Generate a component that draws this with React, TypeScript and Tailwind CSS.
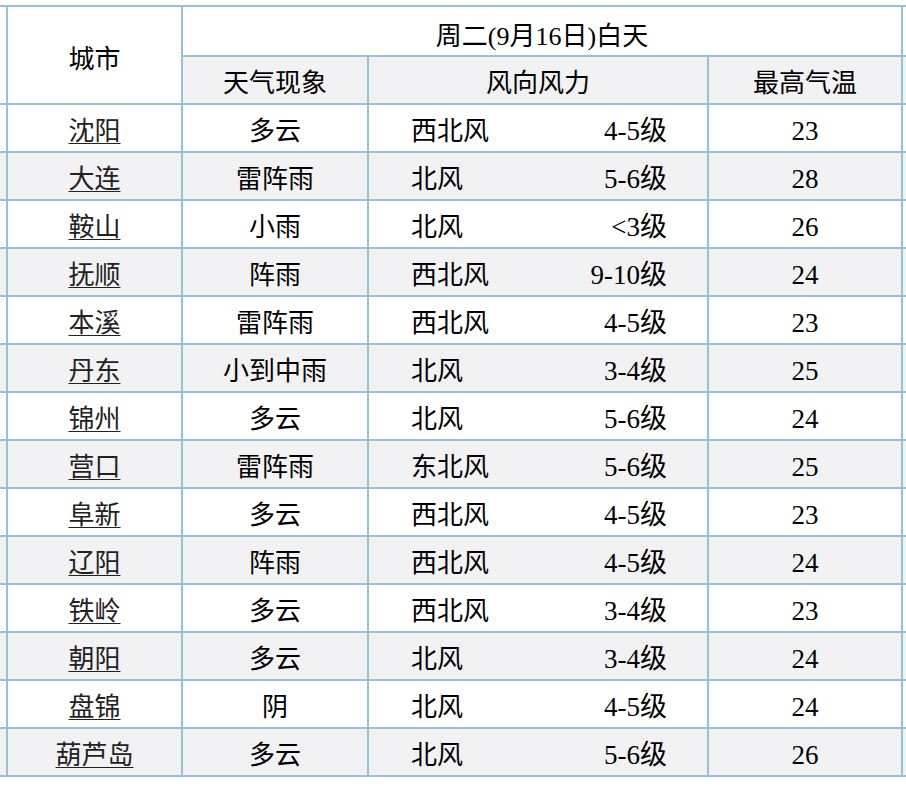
const rows: [string, string, string, string, string][] = [
  ["沈阳", "多云", "西北风", "4-5级", "23"],
  ["大连", "雷阵雨", "北风", "5-6级", "28"],
  ["鞍山", "小雨", "北风", "<3级", "26"],
  ["抚顺", "阵雨", "西北风", "9-10级", "24"],
  ["本溪", "雷阵雨", "西北风", "4-5级", "23"],
  ["丹东", "小到中雨", "北风", "3-4级", "25"],
  ["锦州", "多云", "北风", "5-6级", "24"],
  ["营口", "雷阵雨", "东北风", "5-6级", "25"],
  ["阜新", "多云", "西北风", "4-5级", "23"],
  ["辽阳", "阵雨", "西北风", "4-5级", "24"],
  ["铁岭", "多云", "西北风", "3-4级", "23"],
  ["朝阳", "多云", "北风", "3-4级", "24"],
  ["盘锦", "阴", "北风", "4-5级", "24"],
  ["葫芦岛", "多云", "北风", "5-6级", "26"],
];

export default function App() {
  return (
    <div
      className="w-[906px] h-[786px] bg-white pt-[5px] overflow-hidden text-[26px] text-black"
      style={{ fontFamily: '"Liberation Serif", "Noto Sans CJK SC", serif' }}
    >
      <div className="grid grid-cols-[6px_173px_184px_338px_192px_1fr] grid-rows-[48px_46px_repeat(14,46px)] gap-[2px] py-[2px] bg-[#93c3d4]">
        {/* header */}
        <div className="row-span-2 bg-white" />
        <div className="row-span-2 bg-white flex items-center justify-center pt-[8px]">城市</div>
        <div className="col-span-3 bg-white flex items-center justify-center pt-[10px]">
          周二(9月16日)白天
        </div>
        <div className="bg-white" />
        <div className="bg-[#f2f2f4] flex items-center justify-center pt-[6px]">天气现象</div>
        <div className="bg-[#f2f2f4] flex items-center justify-center pt-[6px]">风向风力</div>
        <div className="bg-[#f2f2f4] flex items-center justify-center pt-[6px]">最高气温</div>
        <div className="bg-[#f2f2f4]" />

        {rows.map(([city, weather, dir, force, temp], i) => {
          const bg = i % 2 === 0 ? "bg-white" : "bg-[#f2f2f4]";
          return [
            <div key={city + "0"} className={bg} />,
            <div key={city + "1"} className={`${bg} flex items-center justify-center pt-[6px]`}>
              <a href="#" className="text-[#222] underline underline-offset-[3px] decoration-1">
                {city}
              </a>
            </div>,
            <div key={city + "2"} className={`${bg} flex items-center justify-center pt-[6px]`}>
              {weather}
            </div>,
            <div
              key={city + "3"}
              className={`${bg} flex items-center justify-between pl-[42px] pr-[40px] pt-[6px]`}
            >
              <span>{dir}</span>
              <span className="text-[27px]">{force}</span>
            </div>,
            <div key={city + "4"} className={`${bg} flex items-center justify-center pt-[6px] text-[27px]`}>
              {temp}
            </div>,
            <div key={city + "5"} className={bg} />,
          ];
        })}
      </div>
    </div>
  );
}
